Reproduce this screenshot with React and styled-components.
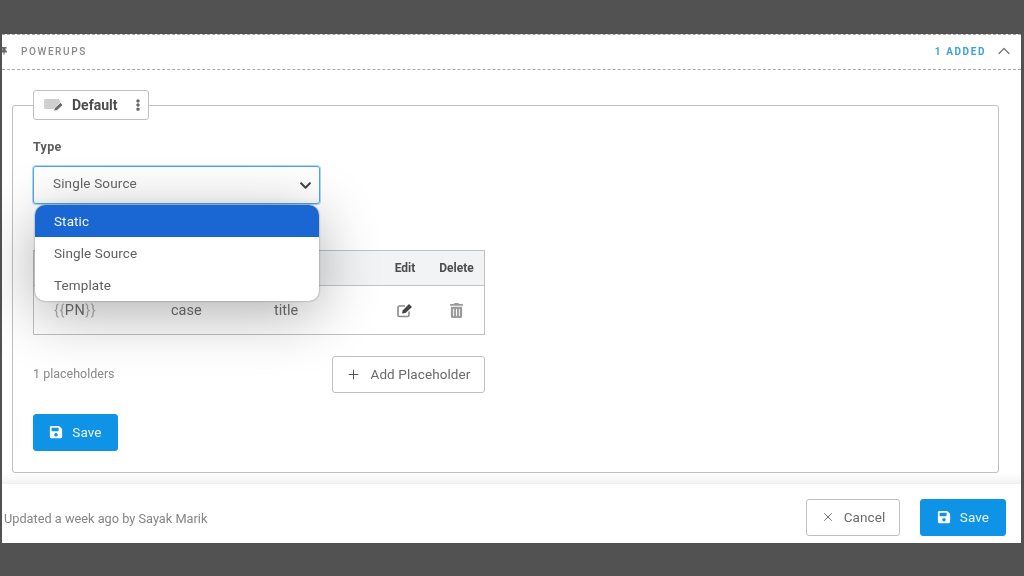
import React from "react";
import styled, { createGlobalStyle } from "styled-components";
import { FaChevronDown, FaSave, FaThumbtack, FaTrashAlt, FaEllipsisV } from "react-icons/fa";
import { ChevronUp, Plus, X } from "lucide-react";

const GlobalStyle = createGlobalStyle`
  html, body {
    margin: 0;
    padding: 0;
    background: #525252;
    font-family: Roboto, "Liberation Sans", sans-serif;
  }
`;

const Page = styled.div`
  width: 1024px;
  height: 576px;
  box-sizing: border-box;
  padding: 34px 3px 33px 2px;
  overflow: hidden;
`;

const Panel = styled.div`
  height: 100%;
  background: #fff;
  display: flex;
  flex-direction: column;
  filter: blur(0.5px);
`;

const Header = styled.div`
  height: 36px;
  box-sizing: border-box;
  flex: none;
  display: flex;
  align-items: center;
  border-top: 1px dashed #a8a8a8;
  border-bottom: 1px dashed #a8a8a8;
  overflow: hidden;
  padding: 0 7px 2px 0;
`;

const Pin = styled(FaThumbtack)`
  font-size: 8px;
  color: #666;
  margin-left: -2px;
  margin-right: 13px;
`;

const HeaderTitle = styled.span`
  font-size: 10px;
  font-weight: 500;
  letter-spacing: 1.6px;
  color: #8a8a8a;
`;

const AddedCount = styled.span`
  margin-left: auto;
  margin-right: 8px;
  font-size: 10px;
  font-weight: 700;
  letter-spacing: 1.6px;
  color: #3d9fe6;
`;

const Body = styled.div`
  flex: 1;
  padding: 35px 22px 10px 10px;
  display: flex;
  border-bottom: 1px solid #f0f0f0;
  background: linear-gradient(to bottom, #fff 0, #fff 402px, #f4f4f4 413px);
`;

const Group = styled.div`
  flex: 1;
  box-sizing: border-box;
  background: #fff;
  border: 1px solid #c0c0c0;
  border-radius: 3px;
  padding: 0 20px;
`;

const GroupTab = styled.div`
  width: 116px;
  height: 30px;
  box-sizing: border-box;
  margin-top: -16px;
  background: #fff;
  border: 1px solid #c0c0c0;
  border-radius: 3px;
  display: flex;
  align-items: center;
  padding: 0 4px 0 10px;
  font-size: 14px;
  font-weight: 700;
  color: #4c4c4c;
`;

const TabLabel = styled.span`
  margin-left: 8px;
`;

const TabMenu = styled(FaEllipsisV)`
  margin-left: auto;
  font-size: 12px;
  color: #666;
`;

const FieldLabel = styled.div`
  margin-top: 19px;
  height: 16px;
  line-height: 16px;
  font-size: 12.5px;
  font-weight: 700;
  letter-spacing: 0.3px;
  color: #5c5c5c;
`;

const SelectWrap = styled.div`
  position: relative;
  margin-top: 11px;
  width: 287px;
`;

const Select = styled.div`
  height: 38px;
  box-sizing: border-box;
  border: 1px solid #4aa8ea;
  border-radius: 3px;
  display: flex;
  align-items: center;
  justify-content: space-between;
  padding: 0 7px 4px 19px;
  font-size: 13.5px;
  letter-spacing: 0.15px;
  color: #666;
  box-shadow: 0 0 0 1px rgba(74, 168, 234, 0.45), inset 0 -8px 8px -8px rgba(0, 0, 0, 0.06);
`;

const Caret = styled(FaChevronDown)`
  font-size: 13px;
  color: #444;
  margin-top: 4px;
`;

const Menu = styled.div`
  position: absolute;
  z-index: 2;
  top: 39px;
  left: 2px;
  width: 284px;
  height: 96px;
  background: #fff;
  border-radius: 10px;
  overflow: hidden;
  box-shadow: 0 0 2px rgba(0, 0, 0, 0.45), 0 12px 60px rgba(0, 0, 0, 0.32);
`;

const MenuItem = styled.div`
  height: 32px;
  display: flex;
  align-items: center;
  padding-left: 19px;
  font-size: 13.5px;
  letter-spacing: 0.1px;
  color: ${(props) => (props.$active ? "#f2f7fd" : "#5f5f5f")};
  background: ${(props) => (props.$active ? "#1a66d2" : "transparent")};
`;

const Table = styled.div`
  margin-top: 46px;
  width: 452px;
  box-sizing: border-box;
  border: 1px solid #c0c0c0;
`;

const TableRow = styled.div`
  display: grid;
  grid-template-columns: 137px 103px 1fr 48px 55px;
  align-items: center;
  height: ${(props) => (props.$head ? "34px" : "48px")};
  background: ${(props) => (props.$head ? "#f1f3f5" : "#fff")};
  border-bottom: ${(props) => (props.$head ? "1px solid #c4c4c4" : "0")};
`;

const HeadCell = styled.div`
  font-size: 12px;
  font-weight: 700;
  color: #4c4c4c;
  text-align: center;
`;

const Cell = styled.div`
  font-size: 14.5px;
  color: #707070;
  padding-left: ${(props) => (props.$first ? "20px" : "0")};
  letter-spacing: ${(props) => (props.$first ? "0.5px" : "0")};
`;

const Braces = styled.span`
  color: #b0b0b0;
`;

const IconCell = styled.div`
  display: flex;
  justify-content: center;
  color: ${(props) => props.$color};
`;

const PlaceholderBar = styled.div`
  width: 452px;
  margin-top: 21px;
  display: flex;
  align-items: center;
  justify-content: space-between;
`;

const PlaceholderCount = styled.span`
  font-size: 12.5px;
  color: #8a8a8a;
  margin-top: -2px;
`;

const Button = styled.button`
  height: 37px;
  width: ${(props) => props.$width};
  box-sizing: border-box;
  display: inline-flex;
  align-items: center;
  justify-content: center;
  gap: 9px;
  border-radius: 3px;
  font-family: inherit;
  font-size: 13.5px;
  letter-spacing: 0.1px;
  padding: 0 0 1px;
  border: 1px solid ${(props) => (props.$primary ? "#0f93e6" : "#c0c0c0")};
  background: ${(props) => (props.$primary ? "#0f93e6" : "#fff")};
  color: ${(props) => (props.$primary ? "#e8f5fd" : "#6a6a6a")};
`;

const SaveRow = styled.div`
  margin-top: 21px;
`;

const Footer = styled.div`
  flex: none;
  height: 59px;
  box-sizing: border-box;
  display: flex;
  align-items: center;
  padding: 8px 15px 0 2px;
  gap: 20px;
`;

const UpdatedText = styled.span`
  margin-right: auto;
  font-size: 12.75px;
  color: #858585;
  margin-top: 2px;
`;

const TagIcon = () => (
  <svg width="20" height="14" viewBox="0 0 20 14">
    <rect x="0" y="1" width="16" height="10" rx="1.5" fill="#cfcfcf" />
    <path d="M9.5 13l1-3 6-5.5 2.500 2.500-6 5.500z" fill="#6a6a6a" stroke="#fff" strokeWidth="0.8" />
  </svg>
);

const EditIcon = () => (
  <svg width="16" height="15" viewBox="0 0 16 15">
    <path d="M12 8.500v3.500a1.500 1.500 0 0 1-1.500 1.500h-8A1.500 1.500 0 0 1 1 12V4.500A1.500 1.500 0 0 1 2.500 3H8" fill="none" stroke="#8a8a8a" strokeWidth="1.6" />
    <path d="M5 10.500l.6-3L12 1l3 3-6.500 6.100z" fill="#444" />
  </svg>
);

export default function App() {
  return (
    <Page>
      <GlobalStyle />
      <Panel>
        <Header>
          <Pin />
          <HeaderTitle>POWERUPS</HeaderTitle>
          <AddedCount>1 ADDED</AddedCount>
          <ChevronUp size={20} color="#777" strokeWidth={1.6} />
        </Header>
        <Body>
          <Group>
            <GroupTab>
              <TagIcon />
              <TabLabel>Default</TabLabel>
              <TabMenu />
            </GroupTab>
            <FieldLabel>Type</FieldLabel>
            <SelectWrap>
              <Select>
                Single Source
                <Caret />
              </Select>
              <Menu>
                <MenuItem $active>Static</MenuItem>
                <MenuItem>Single Source</MenuItem>
                <MenuItem>Template</MenuItem>
              </Menu>
            </SelectWrap>
            <Table>
              <TableRow $head>
                <span />
                <span />
                <span />
                <HeadCell>Edit</HeadCell>
                <HeadCell>Delete</HeadCell>
              </TableRow>
              <TableRow>
                <Cell $first>
                  <Braces>{"{{"}</Braces>PN<Braces>{"}}"}</Braces>
                </Cell>
                <Cell>case</Cell>
                <Cell>title</Cell>
                <IconCell>
                  <EditIcon />
                </IconCell>
                <IconCell $color="#9a9a9a">
                  <FaTrashAlt size={15} />
                </IconCell>
              </TableRow>
            </Table>
            <PlaceholderBar>
              <PlaceholderCount>1 placeholders</PlaceholderCount>
              <Button $width="153px">
                <Plus size={15} strokeWidth={1.6} color="#555" />
                Add Placeholder
              </Button>
            </PlaceholderBar>
            <SaveRow>
              <Button $primary $width="85px">
                <FaSave size={14} color="#fff" />
                Save
              </Button>
            </SaveRow>
          </Group>
        </Body>
        <Footer>
          <UpdatedText>Updated a week ago by Sayak Marik</UpdatedText>
          <Button $width="94px">
            <X size={14} strokeWidth={1.6} color="#666" />
            Cancel
          </Button>
          <Button $primary $width="86px">
            <FaSave size={14} color="#fff" />
            Save
          </Button>
        </Footer>
      </Panel>
    </Page>
  );
}
